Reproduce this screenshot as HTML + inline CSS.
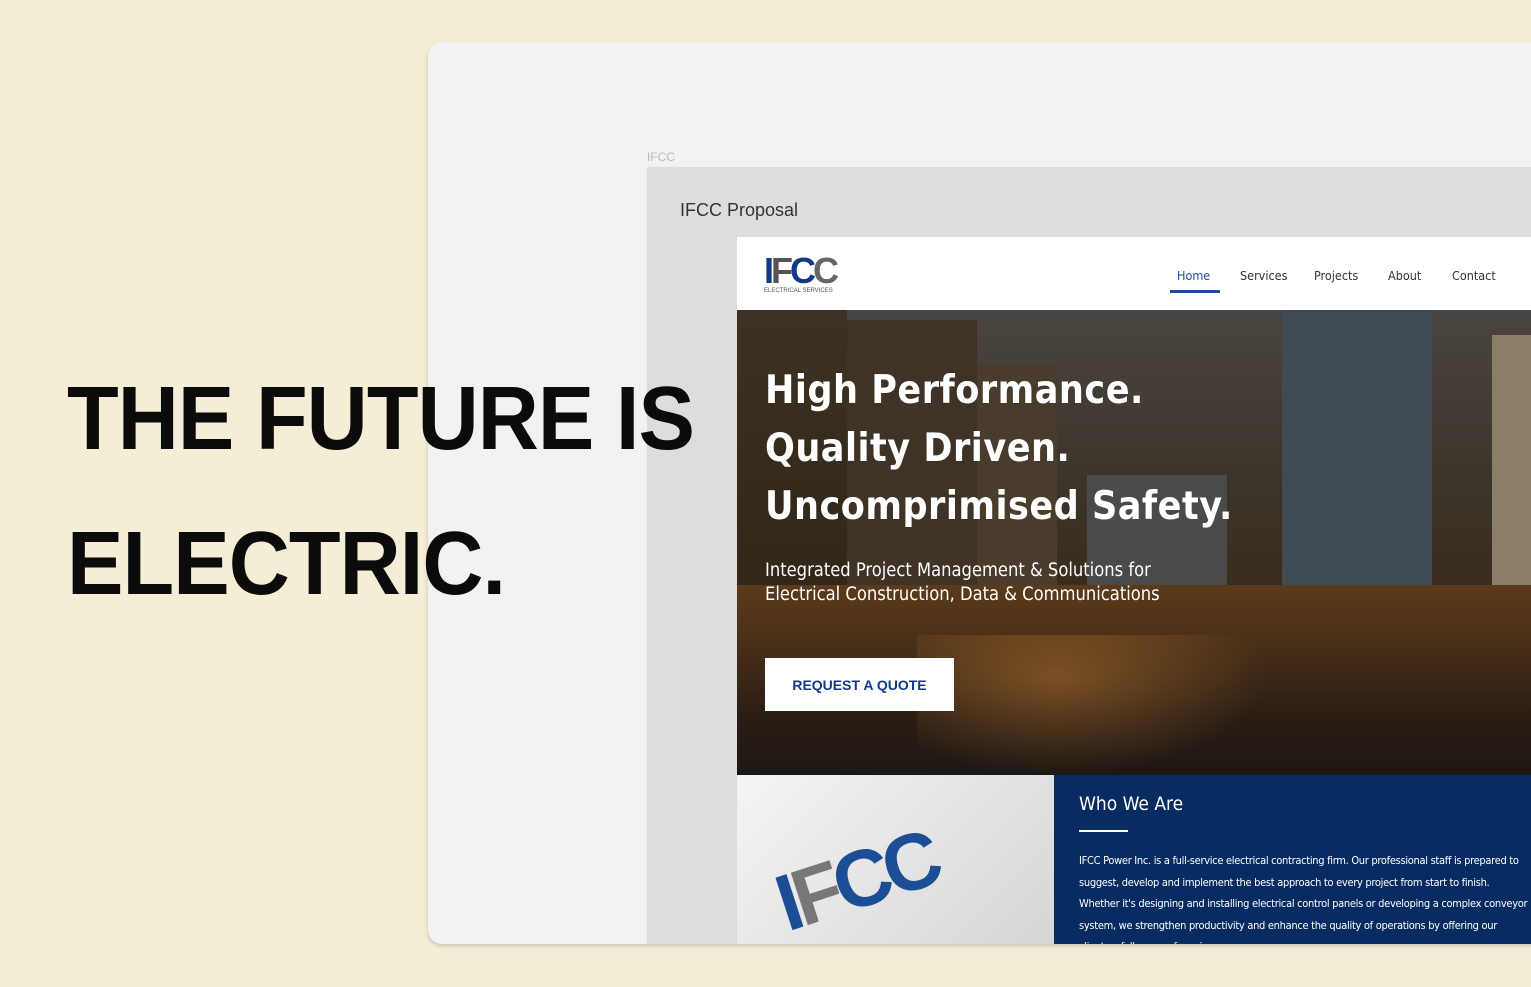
<!DOCTYPE html>
<html><head><meta charset="utf-8"><style>
*{margin:0;padding:0;box-sizing:border-box}
body{width:1531px;height:987px;background:#f4eed7;position:relative;overflow:hidden;font-family:"Liberation Sans",sans-serif}
.card{position:absolute;left:428px;top:42px;width:1120px;height:902px;background:#f2f2f2;border-radius:14px;box-shadow:0 2px 4px rgba(0,0,0,.18);overflow:hidden}
.frame{position:absolute;left:647px;top:167px;width:900px;height:777px;background:#dddddd}
.lbl{position:absolute;left:647px;top:150px;font-size:12px;color:#b9b9b9}
.prop{position:absolute;left:680px;top:200px;font-size:18px;color:#333}
.site{position:absolute;left:737px;top:237px;width:800px;height:707px;background:#fff;overflow:hidden}
.nav{height:73px;position:relative;background:#fff}
.nav a{position:absolute;top:31px;font-size:12.5px;color:#333;font-family:"DejaVu Sans Condensed","Liberation Sans",sans-serif}
.hero{position:absolute;top:73px;left:0;width:800px;height:465px;overflow:hidden;
background:linear-gradient(180deg,#4a4540 0%,#3c352b 35%,#3a2c1c 60%,#2a2018 80%,#201a16 100%)}
.b{position:absolute;bottom:0}
.h1{position:absolute;left:28px;color:#fff;font-weight:bold;font-size:39px;font-family:"DejaVu Sans Condensed","Liberation Sans",sans-serif;letter-spacing:0.5px}
.sub{position:absolute;left:28px;top:249px;color:#fff;font-size:18.2px;line-height:24px;font-family:"DejaVu Sans Condensed","Liberation Sans",sans-serif}
.btn{position:absolute;left:28px;top:348px;width:189px;height:53px;background:#fff;color:#103a88;font-weight:bold;font-size:14px;display:flex;align-items:center;justify-content:center}
.low{position:absolute;top:538px;left:0;width:800px;height:170px}
.limg{position:absolute;left:0;top:0;width:317px;height:170px;background:linear-gradient(135deg,#f4f4f4,#d6d6d6);overflow:hidden}
.navy{position:absolute;left:317px;top:0;width:483px;height:170px;background:#072c62;color:#fff;font-family:"DejaVu Sans Condensed","Liberation Sans",sans-serif}
.big{position:absolute;left:67px;font-size:90px;font-weight:bold;color:#0b0b0b;letter-spacing:-1px;transform:scaleX(0.94);transform-origin:left}
</style></head><body>
<div class="card"></div>
<div class="lbl">IFCC</div>
<div class="frame"></div>
<div class="prop">IFCC Proposal</div>
<div class="site">
 <div class="nav">
  <div style="position:absolute;left:27px;top:16px;font-weight:900;font-size:36px;letter-spacing:-3px;line-height:36px"><span style="color:#103a88">I</span><span style="color:#555">F</span><span style="color:#103a88">C</span><span style="color:#666">C</span></div>
  <div style="position:absolute;left:27px;top:51px;font-size:6px;color:#555">ELECTRICAL SERVICES</div>
  <a style="left:440px;color:#1c4e96">Home</a>
  <div style="position:absolute;left:433px;top:53px;width:50px;height:3px;background:#1c4e96"></div>
  <a style="left:503px">Services</a><a style="left:577px">Projects</a><a style="left:651px">About</a><a style="left:715px">Contact</a>
 </div>
 <div class="hero">
  <div class="b" style="left:0;width:110px;height:465px;background:linear-gradient(#3a3020,#2a2014);opacity:.9"></div>
  <div class="b" style="left:110px;width:130px;height:455px;background:#3e3326"></div>
  <div class="b" style="left:240px;width:80px;height:410px;background:#4a3c2c"></div>
  <div class="b" style="left:350px;width:140px;height:300px;background:#4a4a48"></div>
  <div class="b" style="left:545px;width:150px;height:465px;background:#3f4a55"></div>
  <div class="b" style="left:755px;width:45px;height:440px;background:#8c7e66"></div>
  <div class="b" style="left:0;width:800px;height:190px;background:linear-gradient(180deg,#5a3a1a 0%,#4a3018 30%,#2a1d14 70%,#1d1814 100%)"></div>
  <div class="b" style="left:180px;width:350px;height:140px;background:radial-gradient(ellipse at 40% 30%,rgba(200,130,50,.45),transparent 70%)"></div>
  <div class="h1" style="top:58px">High Performance.</div>
  <div class="h1" style="top:116px">Quality Driven.</div>
  <div class="h1" style="top:174px">Uncomprimised Safety.</div>
  <div class="sub">Integrated Project Management &amp; Solutions for<br>Electrical Construction, Data &amp; Communications</div>
  <div class="btn">REQUEST A QUOTE</div>
 </div>
 <div class="low">
  <div class="limg"><div style="position:absolute;left:38px;top:60px;font-size:80px;font-weight:900;color:#1c4e96;transform:rotate(-18deg);letter-spacing:-6px">I<span style="color:#777">F</span>CC</div></div>
  <div class="navy">
   <div style="position:absolute;left:25px;top:18px;font-size:19px">Who We Are</div>
   <div style="position:absolute;left:25px;top:55px;width:49px;height:2px;background:#fff"></div>
   <div style="position:absolute;left:25px;top:75px;font-size:11px;letter-spacing:-0.3px;line-height:21.5px;width:450px">IFCC Power Inc. is a full-service electrical contracting firm. Our professional staff is prepared to suggest, develop and implement the best approach to every project from start to finish. Whether it's designing and installing electrical control panels or developing a complex conveyor system, we strengthen productivity and enhance the quality of operations by offering our clients a full range of services.</div>
  </div>
 </div>
</div>
<div class="big" style="top:368px">THE FUTURE IS</div>
<div class="big" style="top:513px">ELECTRIC.</div>
</body></html>
